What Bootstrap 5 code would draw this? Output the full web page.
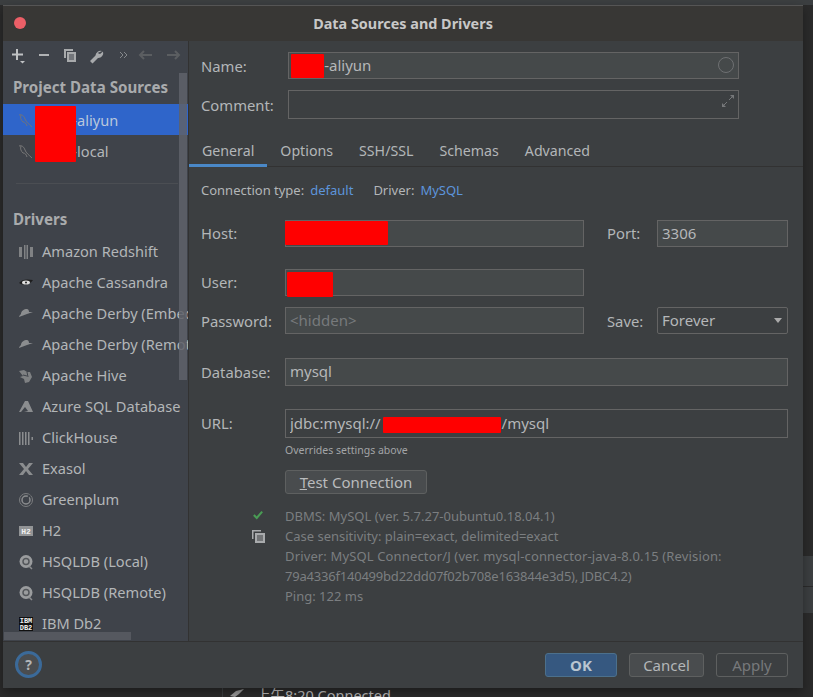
<!DOCTYPE html>
<html lang="en"><head><meta charset="utf-8"><title>Data Sources and Drivers</title>
<link rel="stylesheet" href="https://cdn.jsdelivr.net/npm/bootstrap@5.3.0/dist/css/bootstrap.min.css">
<style>
html,body{height:100%;margin:0}
body{background:#2b2b2b;overflow:hidden;font-family:"Noto Sans",sans-serif;color:#b3b6b8;font-size:14.5px;position:relative}
.desk-top{height:5px;background:#3c3f41}
.desk-row{position:absolute;left:803px;right:0;background:#3c3f41}
.desk-a{top:556px;height:30px}.desk-b{top:587px;height:26px}
.desk-foot{position:absolute;left:222px;top:686px;height:11px;width:591px;overflow:hidden;font-size:14.5px;line-height:14px;color:#bbb;padding:2px 0 0 33px;border-left:1px solid #3c3f41;font-family:"Noto Sans","Noto Sans CJK SC",sans-serif}
.desk-foot svg{position:absolute;left:6px;top:2px}
.win{position:absolute;left:3px;top:5px;width:800px;height:683px;background:#3c3f41;display:flex;flex-direction:column;border-top:1px solid #555;box-shadow:0 4px 10px rgba(0,0,0,.35)}
.win-title{height:35px;flex:none;background:#383735;display:flex;align-items:center;justify-content:center;font-weight:700;font-size:14.4px;color:#c8c8c8;position:relative}
.win-close{position:absolute;left:11px;top:11px;width:12px;height:12px;border-radius:50%;background:#ec5f67}
.win-body{flex:1;display:flex;min-height:0}
.side{width:185px;flex:none;background:#3f434a;position:relative;overflow:hidden;border-right:1px solid #323232;box-sizing:content-box}
.tool{height:32px;display:flex;align-items:flex-start;padding:4px 0 0 8px}
.tool svg{display:block}
.side-h{font-weight:700;font-size:15.1px;color:#a9abad;padding-left:10px;line-height:20px}
.h-one{margin-top:4px;height:27px;padding-top:0}
.tree-item,.drv-item{height:31px;display:flex;align-items:center;padding-left:16px;white-space:pre;background:transparent;border:0;border-radius:0;color:#b3b6b8;font-size:14.6px;width:185px;overflow:hidden}
.tree-item{padding-top:2px}
.tree-item.on{background:#2f65ca;color:#b9c7dc}
.drv-item .ic,.tree-item .ic{width:14px;height:16px;flex:none;margin-right:9px}
.side-rule{height:1px;background:#4b4e53;margin:17px 0 0 13px;width:162px}
.h-two{margin-top:25px;height:22px;margin-bottom:5px}
.vbar{position:absolute;left:176px;top:32px;width:8px;height:307px;background:rgba(95,98,106,.85)}
.hbar{position:absolute;left:1px;top:591px;width:127px;height:8px;background:#55585f}
.main{flex:1;min-width:0;position:relative}
.f-row{display:flex;align-items:center;padding-left:12px}
.f-label{flex:none;color:#b3b6b8;font-size:14.8px}
.w-top{width:87px;padding-top:2px}.w-mid{width:84px}
.pw-lab{padding-top:2px}
.fld{height:27px;background:#45494a;border:1px solid #646464;border-radius:0;color:#b5b7b9;font-size:15px;padding:0 4px 2px;line-height:23px;box-shadow:none}
.fld:focus{background:#45494a;color:#b5b7b9;border-color:#646464;box-shadow:none}
.fld.bare{background:#3c3f41}
.fld::placeholder{color:#777a7c;opacity:1}
.in-host{width:299px;flex:none}
.in-top{width:451px;flex:none}
.in-port{width:131px;flex:none}
.in-wide{width:503px;flex:none}
.gap-lab{margin-left:23px;width:50px}
.wrap-in{position:relative;flex:none;display:block}
.tabs-x{height:35px;margin-top:13px;border-bottom:1px solid #323232;display:flex;padding:0;list-style:none;margin-bottom:0;flex-wrap:nowrap;border-radius:0}
.tabs-x .nav-link{height:35px;padding:9px 13px 0;color:#b3b6b8;font-size:14.2px;border:0;border-radius:0;background:transparent;line-height:20px;margin:0}
.tabs-x .nav-link.active{border-bottom:3px solid #4a88c7;background:transparent;color:#b3b6b8}
.c-line{height:20px;margin-top:13px;font-size:13px;line-height:20px}
.c-line a{color:#5c95dc;text-decoration:none;margin:0 20px 0 6px}
.note{font-size:10.5px;color:#a3a5a7;padding-left:96px;line-height:14px;margin-top:5px}
.btn-test{display:block;margin:13px 0 0 96px;width:142px;height:24px;padding:0;background:#494c4e;border:1px solid #5e6060;border-radius:3px;color:#b9bbbd;font-size:15px;line-height:22px}
.btn-test:hover{background:#494c4e;color:#b9bbbd}
.stat{position:relative;padding-left:96px;margin-top:12px;color:#7b7e80;font-size:13px;line-height:20px;width:570px;white-space:nowrap}
.stat svg{position:absolute;left:63px}
.ln-wide{letter-spacing:.14px}
.ln-tight{letter-spacing:-.21px}
.win-foot{height:47px;flex:none;border-top:1px solid #323232;display:flex;align-items:center;background:#3c3f41;padding:0 15px 1px 12px;gap:12px}
.help{width:27px;height:27px;border-radius:50%;background:#4a4d50;border:3px solid #3b6a99;color:#b3b6b8;font-weight:700;font-size:14px;display:flex;align-items:center;justify-content:center;margin-right:auto;line-height:1}
.b-act{height:24px;padding:0;border-radius:3px;font-size:15px;line-height:22px}
.b-ok{width:72px;background:#365880;border:1px solid #4c708c;color:#b9c5d0;font-weight:700}
.b-ok:hover{background:#365880;color:#b9c5d0}
.b-can{width:75px;background:#494c4e;border:1px solid #5e6060;color:#b3b6b8}
.b-can:hover{background:#494c4e;color:#b3b6b8}
.b-app{width:72px;background:transparent;border:1px solid #5e6060;color:#77797b}
.red{position:absolute;background:#f00;border-radius:1px;z-index:5}
.sel-fake{position:relative;flex:none;width:131px;height:27px;border:1px solid #646464;border-radius:2px;padding:1px 4px 0;line-height:23px;color:#b5b7b9;font-size:15px}
.sel-fake:after{content:"";position:absolute;right:5px;top:10px;border:4.5px solid transparent;border-top:5px solid #aaa}
.ic-end{position:absolute}
.ic-txt{font-family:"Liberation Mono",monospace;font-weight:700}
</style></head><body>
<div class="desk-top"></div><div class="desk-row desk-a"></div><div class="desk-row desk-b"></div>
<div class="desk-foot"><svg width="16" height="9" viewBox="0 0 16 9"><path d="M1 8l6-5 8-2-5 5-4 3z" fill="#9a9a9a"/></svg>上午8:20 Connected</div>

<div class="win">
 <div class="win-title"><span class="win-close"></span>Data Sources and Drivers</div>
 <div class="win-body">
  <div class="side">
   <div class="tool">
    <svg width="172" height="20" viewBox="0 0 172 20">
     <path d="M6 4v11M1 9.500h11" stroke="#c0c2c4" stroke-width="2" fill="none"/><path d="M9 16h5l-2.500 2.500z" fill="#c0c2c4"/>
     <path d="M28 10h10" stroke="#b0b2b4" stroke-width="2"/>
     <path d="M53 4h9v2h-7v7h-2z" fill="#a8aaac"/><path d="M56 7h9v10h-9z" fill="#a8aaac"/><path d="M58 10h5M58 12h5M58 14h5" stroke="#3f434a"/>
     <path d="M91 6a5 5 0 0 0-6.500 4.500l-5.500 5.500 2.500 2.500 5.500-5.500a5 5 0 0 0 5-6.500l-3 2.500-2.500-1z" fill="#a8aaac"/>
     <path d="M109 7l3 3-3 3M113 7l3 3-3 3" stroke="#85888b" fill="none"/>
     <path d="M129 10h12M133 6l-4 4 4 4" stroke="#5b5e61" stroke-width="2" fill="none"/>
     <path d="M156 10h12M164 6l4 4-4 4" stroke="#5b5e61" stroke-width="2" fill="none"/>
    </svg>
   </div>
   <div class="side-h h-one">Project Data Sources</div>
   <div class="list-group list-group-flush">
    <div class="tree-item on"><svg class="ic" viewBox="0 0 14 16"><path d="M0 2c3-1 5 1 6 4 1 3 4 5 7 8M2 2c-1 3 0 5 2 7M4 9c2 0 3 1 4 4" stroke="#6d7380" fill="none"/></svg>        -aliyun</div>
    <div class="tree-item"><svg class="ic" viewBox="0 0 14 16"><path d="M0 2c3-1 5 1 6 4 1 3 4 5 7 8M2 2c-1 3 0 5 2 7M4 9c2 0 3 1 4 4" stroke="#777" fill="none"/></svg>        -local</div>
   </div>
   <div class="side-rule"></div>
   <div class="side-h h-two">Drivers</div>
   <div class="list-group list-group-flush">
    <div class="drv-item"><svg class="ic" viewBox="0 0 14 16"><path d="M0 3h3v10H0zM5 1h1.500v14H5zM7.500 1H9v14H7.500zM11 3h3v10h-3z" fill="#808284"/></svg>Amazon Redshift</div>
    <div class="drv-item"><svg class="ic" viewBox="0 0 14 16"><path d="M0 8c3-4 8-4 14-3-3 5-9 6-14 3z" fill="#1e1e1e"/><ellipse cx="7" cy="7.500" rx="4" ry="2" fill="#ddd"/><circle cx="7" cy="7.500" r="1" fill="#222"/></svg>Apache Cassandra</div>
    <div class="drv-item"><svg class="ic" viewBox="0 0 14 16"><path d="M2 8c0-3 3-5 6-5 1 0 2 1 2 3l4 0-6 2-8 3c0-1 1-2 2-3z" fill="#8b8d8f"/></svg>Apache Derby (Embedded)</div>
    <div class="drv-item"><svg class="ic" viewBox="0 0 14 16"><path d="M2 8c0-3 3-5 6-5 1 0 2 1 2 3l4 0-6 2-8 3c0-1 1-2 2-3z" fill="#8b8d8f"/></svg>Apache Derby (Remote)</div>
    <div class="drv-item"><svg class="ic" viewBox="0 0 14 16"><path d="M0 3l5-1 3 2 3 0 2 5-3 5-4 1-1-4-4-2 3-1-4-5z" fill="#7f8183"/><path d="M4 7l4 1M8 4l1 5" stroke="#3f434a"/></svg>Apache Hive</div>
    <div class="drv-item"><svg class="ic" viewBox="0 0 14 16"><path d="M6 2h3l5 11H5l4-1-3-4-4 5H0z" fill="#8b8d8f"/></svg>Azure SQL Database</div>
    <div class="drv-item"><svg class="ic" viewBox="0 0 14 16"><path d="M0 2h1.500v13H0zM3 2h1.500v13H3zM6 2h1.500v13H6zM9 2h1.500v13H9zM12.500 7H14v3h-1.500z" fill="#8b8d8f"/></svg>ClickHouse</div>
    <div class="drv-item"><svg class="ic" viewBox="0 0 14 16"><path d="M0 2h4l3 4 3-4h4L9 8l5 6h-4L7 10l-3 4H0l5-6z" fill="#8b8d8f"/></svg>Exasol</div>
    <div class="drv-item"><svg class="ic" viewBox="0 0 14 16"><circle cx="7" cy="8" r="6.500" fill="none" stroke="#7b7d7f"/><circle cx="7" cy="8" r="4" fill="none" stroke="#8b8d8f" stroke-width="1.500"/><path d="M11 3L6 9" stroke="#3f434a" stroke-width="1.500"/></svg>Greenplum</div>
    <div class="drv-item"><svg class="ic" viewBox="0 0 14 16"><path d="M0 3h14v10H0z" fill="#929496"/><text class="ic-txt" x="7" y="11" font-size="8" text-anchor="middle" fill="#f0f0f0">H2</text></svg>H2</div>
    <div class="drv-item"><svg class="ic" viewBox="0 0 14 16"><circle cx="7" cy="7.500" r="6.500" fill="#9a9c9e"/><circle cx="7" cy="7.500" r="3" fill="none" stroke="#54575b" stroke-width="1.500"/><path d="M10 12l3 3" stroke="#8b8d8f" stroke-width="1.500"/></svg>HSQLDB (Local)</div>
    <div class="drv-item"><svg class="ic" viewBox="0 0 14 16"><circle cx="7" cy="7.500" r="6.500" fill="#9a9c9e"/><circle cx="7" cy="7.500" r="3" fill="none" stroke="#54575b" stroke-width="1.500"/><path d="M10 12l3 3" stroke="#8b8d8f" stroke-width="1.500"/></svg>HSQLDB (Remote)</div>
    <div class="drv-item"><svg class="ic" viewBox="0 0 14 16"><path d="M0 1h14v14H0z" fill="#101010"/><text class="ic-txt" x="7" y="7" font-size="7" text-anchor="middle" fill="#f0f0f0">IBM</text><text class="ic-txt" x="7" y="14" font-size="7" text-anchor="middle" fill="#f0f0f0">DB2</text></svg>IBM Db2</div>
   </div>
   <div class="vbar"></div><div class="hbar"></div>
  </div>

  <div class="main">
   <div class="f-row" style="padding-top:11px"><span class="f-label w-top">Name:</span>
    <div class="wrap-in"><input class="form-control fld in-top" value="        -aliyun" aria-label="Name">
     <svg class="ic-end" style="right:4px;top:4px" width="18" height="18" viewBox="0 0 18 18"><circle cx="9" cy="9" r="7.500" fill="none" stroke="#6e7072"/></svg></div></div>
   <div class="f-row" style="margin-top:11px"><span class="f-label w-top">Comment:</span>
    <div class="wrap-in"><input class="form-control fld bare in-top" style="height:29px" aria-label="Comment">
     <svg class="ic-end" style="right:4px;top:4px" width="14" height="14" viewBox="0 0 14 14"><path d="M9 1h4v4zM1 13V9l4 4z" fill="#76787a"/><path d="M11 3L8 6M3 11l3-3" stroke="#76787a"/></svg></div></div>
   <ul class="nav tabs-x">
    <li class="nav-item"><a class="nav-link active" href="#">General</a></li>
    <li class="nav-item"><a class="nav-link" href="#">Options</a></li>
    <li class="nav-item"><a class="nav-link" href="#">SSH/SSL</a></li>
    <li class="nav-item"><a class="nav-link" href="#">Schemas</a></li>
    <li class="nav-item"><a class="nav-link" href="#">Advanced</a></li>
   </ul>
   <div class="c-line f-row">Connection type:<a href="#">default</a>Driver:<a href="#">MySQL</a></div>
   <div class="f-row" style="margin-top:20px"><span class="f-label w-mid">Host:</span><input class="form-control fld in-host" aria-label="Host"><span class="f-label gap-lab">Port:</span><input class="form-control fld in-port" value="3306" aria-label="Port"></div>
   <div class="f-row" style="margin-top:22px"><span class="f-label w-mid">User:</span><input class="form-control fld in-host" aria-label="User"></div>
   <div class="f-row" style="margin-top:11px"><span class="f-label w-mid pw-lab">Password:</span><input class="form-control fld in-host" placeholder="&lt;hidden&gt;" aria-label="Password"><span class="f-label gap-lab pw-lab">Save:</span><div class="sel-fake">Forever</div></div>
   <div class="f-row" style="margin-top:24px"><span class="f-label w-mid">Database:</span><input class="form-control fld in-wide" style="height:28px" value="mysql" aria-label="Database"></div>
   <div class="f-row" style="margin-top:23px"><span class="f-label w-mid">URL:</span><input class="form-control fld bare in-wide" style="height:29px" value="jdbc:mysql://                               /mysql" aria-label="URL"></div>
   <div class="note">Overrides settings above</div>
   <button class="btn btn-test" type="button"><u>T</u>est Connection</button>
   <div class="stat">
    <svg style="top:4px" width="12" height="10" viewBox="0 0 14 12"><path d="M2 6l3.500 3.500L12 2" stroke="#499c54" stroke-width="2.500" fill="none"/></svg>
    <svg style="top:24px" width="13" height="13" viewBox="0 0 13 13"><path d="M0 0h9v1.500H1.500V9H0z" fill="#a8aaac"/><path d="M3 3h10v10H3z" fill="#a8aaac"/><path d="M5 6h6M5 8h6M5 10h6" stroke="#3c3f41"/></svg>
    DBMS: MySQL (ver. 5.7.27-0ubuntu0.18.04.1)<br>Case sensitivity: plain=exact, delimited=exact<br><span class="ln-wide">Driver: MySQL Connector/J (ver. mysql-connector-java-8.0.15 (Revision:</span><br><span class="ln-tight">79a4336f140499bd22dd07f02b708e163844e3d5), JDBC4.2)</span><br>Ping: 122 ms
   </div>
  </div>
 </div>
 <div class="win-foot">
  <div class="help">?</div>
  <button class="btn b-act b-ok" type="button">OK</button>
  <button class="btn b-act b-can" type="button">Cancel</button>
  <button class="btn b-act b-app" type="button">Apply</button>
 </div>
</div>
<div class="red" style="left:35px;top:106px;width:41px;height:56px"></div>
<div class="red" style="left:291px;top:54px;width:33px;height:24px"></div>
<div class="red" style="left:285px;top:221px;width:103px;height:24px"></div>
<div class="red" style="left:287px;top:272px;width:46px;height:25px"></div>
<div class="red" style="left:383px;top:417px;width:118px;height:16px"></div>
<script src="https://cdn.jsdelivr.net/npm/bootstrap@5.3.0/dist/js/bootstrap.bundle.min.js"></script>
</body></html>
